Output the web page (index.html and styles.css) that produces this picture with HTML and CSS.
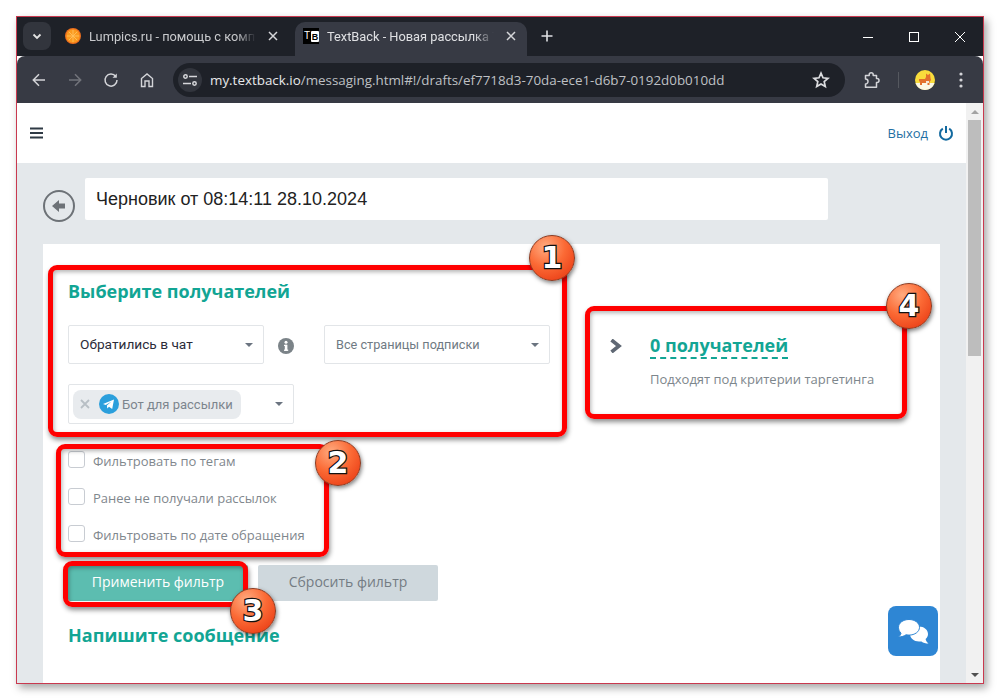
FILE: index.html
```html
<!DOCTYPE html>
<html lang="ru">
<head>
  <meta charset="UTF-8" />
  <title>TextBack - Новая рассылка TextBack</title>
  <link rel="stylesheet" href="styles.css">
</head>
<body>
  <div class="window">
    <div class="tabstrip">
      <button class="tab-search">
        <svg width="12" height="12" viewBox="0 0 12 12"><path d="M2.5 4.5 6 8l3.5-3.5" fill="none" stroke="#e3e3e3" stroke-width="1.8"/></svg>
      </button>
      <div class="tab tab-inactive">
        <svg class="favicon" width="16" height="16" viewBox="0 0 16 16">
          <circle cx="8" cy="8" r="8" fill="#ef6f1e"/>
          <circle cx="8" cy="8" r="6.800" fill="#fb9a1f"/>
          <path d="M8 2v12M2 8h12M3.800 3.800l8.400 8.400M12.200 3.800l-8.400 8.400" stroke="#ffc05c" stroke-width=".9"/>
        </svg>
        <span class="tab-title">Lumpics.ru - помощь с компьютером</span>
        <svg class="tab-close" width="10" height="10" viewBox="0 0 10 10"><path d="M1 1l8 8M9 1l-8 8" stroke="#d5d6d9" stroke-width="1.5"/></svg>
      </div>
      <div class="tab tab-active">
        <span class="tb-icon">T<b>B</b></span>
        <span class="tab-title">TextBack - Новая рассылка TextBack</span>
        <svg class="tab-close" width="10" height="10" viewBox="0 0 10 10"><path d="M1 1l8 8M9 1l-8 8" stroke="#d5d6d9" stroke-width="1.5"/></svg>
      </div>
      <svg class="new-tab" width="12" height="12" viewBox="0 0 12 12"><path d="M6 .5v11M.5 6h11" stroke="#dfe0e3" stroke-width="1.6"/></svg>
      <div class="window-controls">
        <svg width="12" height="12" viewBox="0 0 12 12"><path d="M1 6.500h10" stroke="#fff" stroke-width="1"/></svg>
        <svg width="12" height="12" viewBox="0 0 12 12"><rect x="1.500" y="1.500" width="9" height="9" fill="none" stroke="#fff" stroke-width="1"/></svg>
        <svg width="12" height="12" viewBox="0 0 12 12"><path d="M1 1l10 10M11 1 1 11" stroke="#fff" stroke-width="1"/></svg>
      </div>
    </div>

    <div class="toolbar">
      <svg class="tool-icon" width="16" height="16" viewBox="0 0 16 16"><path d="M14 8H2.500M8 2.300 2.300 8 8 13.700" fill="none" stroke="#d3d4d8" stroke-width="1.500"/></svg>
      <svg class="tool-icon" width="16" height="16" viewBox="0 0 16 16"><path d="M2 8h11.500M8 2.300 13.700 8 8 13.700" fill="none" stroke="#72747b" stroke-width="1.500"/></svg>
      <svg class="tool-icon" width="16" height="16" viewBox="0 0 16 16"><path d="M12.800 4.500A6 6 0 1 0 14 8" fill="none" stroke="#d3d4d8" stroke-width="1.500"/><path d="M13.800 1.500v4.300H9.500z" fill="#d3d4d8"/></svg>
      <svg class="tool-icon" width="16" height="16" viewBox="0 0 16 16"><path d="M2.500 14.500V6.500L8 2l5.500 4.500v8H10V9H6v5.500z" fill="none" stroke="#d3d4d8" stroke-width="1.400"/></svg>
      <div class="omnibox">
        <span class="site-info">
          <svg width="14" height="12" viewBox="0 0 14 12" fill="none" stroke="#d6d7da" stroke-width="1.500"><circle cx="2.500" cy="2.500" r="1.700"/><path d="M6 2.500h8M0 9.500h8"/><circle cx="11.500" cy="9.500" r="1.700"/></svg>
        </span>
        <span class="url"><b>my.textback.io</b>/messaging.html#!/drafts/ef7718d3-70da-ece1-d6b7-0192d0b010dd</span>
        <svg class="star" width="18" height="18" viewBox="0 0 18 18"><path d="M9 2.200l2 4.600 5 .5-3.800 3.300 1.100 4.900L9 13l-4.300 2.500 1.100-4.900L2 7.300l5-.5z" fill="none" stroke="#dcdde0" stroke-width="1.700"/></svg>
      </div>
      <svg class="ext-icon" width="18" height="18" viewBox="0 0 18 18"><path d="M2.500 4.500h3.700V3.700a2 2 0 0 1 4 0v.8h3.300V7.500h.5a2 2 0 0 1 0 4h-.5v4.800H2.500v-3.300a2.500 2.500 0 0 0 0-5z" fill="none" stroke="#d3d4d8" stroke-width="1.500" stroke-linejoin="round"/></svg>
      <span class="tool-sep"></span>
      <svg class="avatar" width="20" height="20" viewBox="0 0 20 20">
        <circle cx="10" cy="10" r="10" fill="#f9dc3c"/>
        <path d="M.500 13h19A10 10 0 0 1 .500 13z" fill="#fbf7e4"/>
        <path d="M4 9h6l1-2V3.500l2 1.500 2-1.500.5 4.500.5 2-1.500 2v3h-2v-2H7v2H5v-3L4 11z" fill="#e2702c"/>
        <path d="M11 11h3v2h-3z" fill="#f6e7d8"/>
      </svg>
      <svg class="menu-dots" width="4" height="16" viewBox="0 0 4 16"><circle cx="2" cy="2" r="1.600" fill="#d3d4d8"/><circle cx="2" cy="8" r="1.600" fill="#d3d4d8"/><circle cx="2" cy="14" r="1.600" fill="#d3d4d8"/></svg>
    </div>

    <div class="viewport">
      <div class="page">
        <header class="top-bar">
          <svg class="burger" width="13" height="12" viewBox="0 0 13 12"><path d="M0 1.500h13M0 6h13M0 10.500h13" stroke="#2f3a45" stroke-width="2"/></svg>
          <a class="logout">Выход</a>
          <svg class="power" width="16" height="16" viewBox="0 0 16 16"><path d="M4.800 3.600a6 6 0 1 0 6.400 0" fill="none" stroke="#12699f" stroke-width="2"/><path d="M8 1v7" stroke="#12699f" stroke-width="2"/></svg>
        </header>

        <main class="content">
          <div class="title-row">
            <span class="back-btn">
              <svg width="14" height="12" viewBox="0 0 14 12"><path d="M7 0v3.500h6v5H7V12L0 6z" fill="#6d7277"/></svg>
            </span>
            <div class="title-input">Черновик от 08:14:11 28.10.2024</div>
          </div>

          <section class="card">
            <div class="targeting">
              <div class="targeting-form">
                <h3 class="section-title">Выберите получателей</h3>
                <div class="select-row">
                  <div class="select select-source"><span>Обратились в чат</span><i class="caret"></i></div>
                  <span class="info-wrap">
                    <svg width="16" height="16" viewBox="0 0 16 16"><circle cx="8" cy="8" r="8" fill="#7b8388"/><rect x="6.800" y="6.800" width="2.600" height="6" fill="#fff"/><rect x="6" y="11.600" width="4.200" height="1.300" fill="#fff"/><rect x="6" y="6.800" width="3" height="1.200" fill="#fff"/><circle cx="8" cy="4.200" r="1.500" fill="#fff"/></svg>
                  </span>
                  <div class="select select-pages"><span>Все страницы подписки</span><i class="caret"></i></div>
                </div>
                <div class="select select-bot">
                  <span class="bot-tag">
                    <svg width="10" height="10" viewBox="0 0 10 10"><path d="M1 1l8 8M9 1l-8 8" stroke="#b8bfc5" stroke-width="1.800"/></svg>
                    <svg width="20" height="20" viewBox="0 0 20 20"><circle cx="10" cy="10" r="10" fill="#2b9fdc"/><path d="M4 10l11-4.500-1.800 9.500-3.200-2.300-1.700 1.700-.4-3 4.600-4-5.800 3.500z" fill="#fff"/></svg>
                    <span class="bot-name">Бот для рассылки</span>
                  </span>
                  <i class="caret"></i>
                </div>
              </div>
              <div class="targeting-summary">
                <svg class="chevron" width="12" height="14" viewBox="0 0 12 14"><path d="M1.500 1 9 7l-7.500 6" fill="none" stroke="#5f6874" stroke-width="3.600"/></svg>
                <div>
                  <div class="count">0 получателей</div>
                  <div class="count-note">Подходят под критерии таргетинга</div>
                </div>
              </div>
            </div>

            <ul class="filters">
              <li><span class="check"></span>Фильтровать по тегам</li>
              <li><span class="check"></span>Ранее не получали рассылок</li>
              <li><span class="check"></span>Фильтровать по дате обращения</li>
            </ul>

            <div class="actions">
              <button class="btn btn-apply">Применить фильтр</button>
              <button class="btn btn-reset">Сбросить фильтр</button>
            </div>

            <h3 class="section-title message-title">Напишите сообщение</h3>
          </section>
        </main>
      </div>

      <div class="scrollbar">
        <i class="arrow-up"></i>
        <div class="thumb"></div>
        <i class="arrow-down"></i>
      </div>
    </div>
  </div>

  <div class="chat-fab">
    <svg width="31" height="25" viewBox="0 0 31 25" fill="#fff">
      <path d="M21 7.500c5 0 9 3.300 9 7.500 0 2-.9 3.800-2.400 5.100.3 1.800 1.300 3.300 2.900 4.400-2.800 0-5.300-.8-7-2.100-.8.100-1.600.100-2.500.100-5 0-9-3.300-9-7.500s4-7.500 9-7.500z"/>
      <path d="M11 .5c5.800 0 10.500 3.400 10.500 7.800s-4.700 7.800-10.500 7.800c-1 0-2-.1-3-.3C6.400 17 3.700 18 .5 18c1.300-1 2.200-2.300 2.500-3.900C1.400 12.700.5 10.600.5 8.300.5 3.900 5.200.5 11 .5z" stroke="#2e86d4" stroke-width="1"/>
    </svg>
  </div>

  <div class="mark mark-1"></div>
  <div class="mark mark-2"></div>
  <div class="mark mark-3"></div>
  <div class="mark mark-4"></div>
  <div class="badge badge-1">1</div>
  <div class="badge badge-2">2</div>
  <div class="badge badge-3">3</div>
  <div class="badge badge-4">4</div>
</body>
</html>
```

FILE: styles.css
```css
* {
  box-sizing: border-box;
}
html, body {
  height: 700px;
  overflow: hidden;
}
body {
  margin: 0;
  background-color: #fff;
  font-family: "Open Sans", Arial, sans-serif;
}
.window {
  width: 968px;
  height: 668px;
  margin: 16px;
  display: flex;
  flex-direction: column;
  border: 1px solid #c9394f;
  box-shadow: 3px 4px 8px rgba(0,0,0,0.35);
  overflow: hidden;
}

/* browser chrome */
.tabstrip {
  height: 39px;
  flex: none;
  display: flex;
  align-items: flex-end;
  background-color: #1e2128;
  padding-left: 6px;
}
.tab-search {
  width: 28px;
  height: 28px;
  margin-bottom: 6px;
  border: none;
  border-radius: 8px;
  padding: 0;
  display: flex;
  align-items: center;
  justify-content: center;
  background-color: #32353d;
}
.tab {
  height: 34px;
  display: flex;
  align-items: center;
  padding: 0 11px 6px 8px;
  gap: 8px;
  color: #c9cacd;
  font: 12.8px Roboto, sans-serif;
}
.tab-inactive {
  width: 244px;
  padding-left: 14px;
  padding-right: 17px;
}
.tab-active {
  width: 232px;
  border-radius: 10px 10px 0 0;
  background-color: #373a44;
  color: #dfe0e3;
}
.favicon {
  flex: none;
}
.tb-icon {
  flex: none;
  width: 16px;
  height: 16px;
  display: flex;
  align-items: center;
  background-color: #000;
  color: #fff;
  font: 10px/12px "Liberation Sans", sans-serif;
  padding-left: 1px;
}
.tb-icon b {
  width: 9px;
  height: 11px;
  margin-left: 1px;
  border-radius: 1px;
  background-color: #fff;
  color: #000;
  font-size: 9px;
  text-align: center;
}
.tab-title {
  flex: 1;
  min-width: 0;
  white-space: nowrap;
  overflow: hidden;
  -webkit-mask-image: linear-gradient(to right, #000 88%, transparent);
  mask-image: linear-gradient(to right, #000 88%, transparent);
}
.tab-close {
  flex: none;
  margin-left: 4px;
}
.new-tab {
  margin: 0 0 14px 14px;
}
.window-controls {
  margin-left: auto;
  display: flex;
  gap: 34px;
  padding: 0 17px 13px 0;
}
.toolbar {
  height: 47px;
  flex: none;
  display: flex;
  align-items: center;
  background-color: #373a44;
  border-radius: 8px 8px 0 0;
  padding-left: 14px;
}
.tool-icon {
  flex: none;
  margin-right: 20px;
}
.tool-icon:nth-child(4) {
  margin-right: 18px;
}
.omnibox {
  width: 672px;
  height: 34px;
  flex: none;
  display: flex;
  align-items: center;
  border-radius: 17px;
  background-color: #1e2128;
  padding-left: 5px;
  color: #bfc0c4;
  font-size: 13.4px;
}
.site-info {
  width: 24px;
  height: 24px;
  flex: none;
  border-radius: 50%;
  background-color: #32353d;
  display: flex;
  align-items: center;
  justify-content: center;
  margin-right: 8px;
}
.url {
  white-space: nowrap;
}
.url b {
  font-weight: 400;
  color: #e8e9eb;
}
.star {
  margin-left: auto;
  margin-right: 15px;
}
.ext-icon {
  flex: none;
  margin-left: 18px;
}
.tool-sep {
  width: 1px;
  height: 16px;
  margin: 0 16px 0 17px;
  background-color: #55585f;
}
.avatar {
  flex: none;
}
.menu-dots {
  flex: none;
  margin-left: 24px;
}

/* page */
.viewport {
  flex: 1;
  min-height: 0;
  display: flex;
}
.page {
  flex: 1;
  min-width: 0;
  display: flex;
  flex-direction: column;
}
.top-bar {
  height: 60px;
  flex: none;
  display: flex;
  align-items: center;
  padding: 0 12px 0 13px;
  background-color: #fff;
}
.logout {
  margin-left: auto;
  margin-right: 10px;
  color: #1f6fa3;
  font-size: 13px;
}
.content {
  flex: 1;
  min-height: 0;
  overflow: hidden;
  background-color: #e4e8eb;
  padding: 15px 26px 0;
}
.title-row {
  display: flex;
  align-items: flex-start;
  gap: 10px;
}
.back-btn {
  width: 32px;
  height: 32px;
  flex: none;
  margin-top: 12px;
  border: 2px solid #6d7277;
  border-radius: 50%;
  display: flex;
  align-items: center;
  justify-content: center;
}
.title-input {
  width: 743px;
  height: 42px;
  padding-left: 11px;
  background-color: #fff;
  border-radius: 2px;
  color: #222;
  font: 18px/42px "Liberation Sans", Arial, sans-serif;
}
.card {
  margin-top: 22px;
  height: 500px;
  padding: 35px 25px 0;
  background-color: #fff;
}
.targeting {
  display: flex;
}
.targeting-form {
  width: 482px;
  flex: none;
}
.section-title {
  margin: 0;
  color: #12a594;
  font-size: 18px;
  line-height: 24px;
  font-weight: 700;
}
.select-row {
  display: flex;
  margin-top: 22px;
}
.select {
  position: relative;
  height: 39px;
  display: flex;
  align-items: center;
  border: 1px solid #e2e5e8;
  border-radius: 2px;
  padding: 0 0 1px 11px;
  color: #6f7a83;
  font: 12.7px Roboto, sans-serif;
}
.select-source {
  width: 196px;
  color: #2c2c3a;
  font-size: 13.7px;
}
.select-pages {
  width: 226px;
}
.select-bot {
  width: 226px;
  height: 40px;
  margin-top: 20px;
  padding: 0 0 0 4px;
  font-size: 13px;
}
.info-wrap {
  width: 60px;
  display: flex;
  align-items: center;
  padding: 3px 0 0 14px;
}
.caret {
  position: absolute;
  right: 10px;
  top: 50%;
  margin-top: -2px;
  border-left: 4px solid transparent;
  border-right: 4px solid transparent;
  border-top: 4px solid #6b7480;
}
.bot-tag {
  width: 168px;
  height: 29px;
  display: flex;
  align-items: center;
  gap: 9px;
  padding-left: 7px;
  border-radius: 8px;
  background-color: #e8ebee;
}
.bot-name {
  margin-left: -6px;
  color: #7c858d;
}
.targeting-summary {
  display: flex;
  padding: 55px 0 0 60px;
}
.chevron {
  flex: none;
  margin: 5px 28px 0 0;
}
.count {
  display: inline-block;
  color: #12a594;
  font-size: 18px;
  line-height: 23px;
  font-weight: 700;
  border-bottom: 2px dashed #12a594;
}
.count-note {
  margin-top: 12px;
  color: #7d868c;
  font-size: 13px;
  line-height: 16px;
  white-space: nowrap;
}
.filters {
  list-style: none;
  margin: 28px 0 0;
  padding: 0;
}
.filters li {
  height: 37px;
  display: flex;
  align-items: flex-start;
  gap: 8px;
  color: #7f878d;
  font-size: 13px;
  line-height: 18px;
}
.check {
  width: 17px;
  height: 17px;
  flex: none;
  margin-top: -1px;
  border: 1px solid #c8ccd2;
  border-radius: 3px;
}
.actions {
  display: flex;
  gap: 10px;
  margin-top: 2px;
}
.btn {
  width: 180px;
  height: 36px;
  border: none;
  border-radius: 2px;
  padding: 0 0 3px;
  font: 14px "Open Sans", sans-serif;
}
.btn-apply {
  background-color: #5cbdb0;
  color: #fff;
}
.btn-reset {
  background-color: #cfd8dd;
  color: #747c83;
}
.message-title {
  margin-top: 22px;
}
.scrollbar {
  width: 17px;
  flex: none;
  display: flex;
  flex-direction: column;
  align-items: center;
  background-color: #f1f1f1;
  padding: 7px 2px 0;
}
.arrow-up {
  border-left: 4px solid transparent;
  border-right: 4px solid transparent;
  border-bottom: 4px solid #a3a3a3;
}
.thumb {
  width: 13px;
  height: 236px;
  margin-top: 6px;
  background-color: #bdbdbd;
}
.arrow-down {
  margin-top: auto;
  margin-bottom: 6px;
  border-left: 4px solid transparent;
  border-right: 4px solid transparent;
  border-top: 4px solid #505050;
}

/* floating chat button */
.chat-fab {
  position: absolute;
  left: 888px;
  top: 606px;
  width: 50px;
  height: 50px;
  border-radius: 8px;
  background-color: #2e86d4;
  display: flex;
  align-items: center;
  justify-content: center;
}

/* screenshot annotations */
.mark {
  position: absolute;
  border: 5px solid #ff0000;
  border-radius: 9px;
  box-shadow: 1px 3px 5px rgba(0,0,0,0.45), inset 1px 2px 4px rgba(0,0,0,0.3);
}
.mark-1 { left: 48px; top: 265px; width: 519px; height: 172px; }
.mark-2 { left: 56px; top: 444px; width: 273px; height: 113px; }
.mark-3 { left: 63px; top: 561px; width: 185px; height: 46px; }
.mark-4 { left: 585px; top: 306px; width: 322px; height: 113px; }
.badge {
  position: absolute;
  width: 46px;
  height: 46px;
  border-radius: 50%;
  border: 1px solid #8c3a20;
  background: radial-gradient(circle at 35% 25%, #ffab80 0%, #fb6a35 45%, #e5300c 100%);
  box-shadow: 1px 2px 4px rgba(0,0,0,0.5);
  color: #fff;
  font: bold 30px/44px "DejaVu Sans", sans-serif;
  text-align: center;
  -webkit-text-stroke: 2.5px #111;
  paint-order: stroke fill;
}
.badge-1 { left: 529px; top: 235px; }
.badge-2 { left: 315px; top: 440px; }
.badge-3 { left: 230px; top: 588px; }
.badge-4 { left: 886px; top: 283px; }
```
